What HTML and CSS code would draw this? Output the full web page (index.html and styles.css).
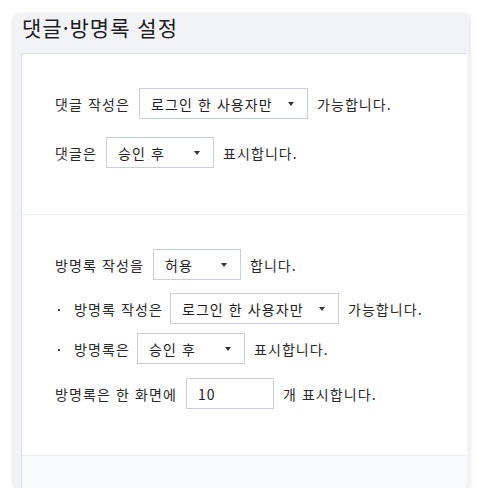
FILE: index.html
```html
<!DOCTYPE html>
<html lang="ko">
<head>
<meta charset="utf-8">
<title>댓글·방명록 설정</title>
<link rel="stylesheet" href="styles.css">
</head>
<body>
<div class="card">
  <h2 class="card-title">댓글·방명록 설정</h2>
  <div class="panel">
    <div class="section section-comment">
      <div class="row">
        <span class="label">댓글 작성은</span>
        <div class="select w168"><span>로그인 한 사용자만</span><i class="arrow"></i></div>
        <span class="label">가능합니다.</span>
      </div>
      <div class="row row-gap18">
        <span class="label">댓글은</span>
        <div class="select w107"><span>승인 후</span><i class="arrow"></i></div>
        <span class="label">표시합니다.</span>
      </div>
    </div>
    <div class="section section-guest">
      <div class="row">
        <span class="label">방명록 작성을</span>
        <div class="select w87"><span>허용</span><i class="arrow"></i></div>
        <span class="label">합니다.</span>
      </div>
      <div class="row row-gap13">
        <i class="bullet"></i>
        <span class="label">방명록 작성은</span>
        <div class="select w168"><span>로그인 한 사용자만</span><i class="arrow"></i></div>
        <span class="label">가능합니다.</span>
      </div>
      <div class="row row-gap9">
        <i class="bullet"></i>
        <span class="label">방명록은</span>
        <div class="select w107"><span>승인 후</span><i class="arrow"></i></div>
        <span class="label">표시합니다.</span>
      </div>
      <div class="row row-gap14">
        <span class="label">방명록은 한 화면에</span>
        <div class="input w87">10</div>
        <span class="label">개 표시합니다.</span>
      </div>
    </div>
    <div class="footer"></div>
  </div>
</div>
</body>
</html>
```

FILE: styles.css
```css
* { box-sizing: border-box; }
html, body {
  margin: 0;
  padding: 0;
  background: #ffffff;
  font-family: "Noto Sans CJK KR", "Noto Sans", sans-serif;
  color: #2a2a2a;
}
body { padding: 14px 14px 0 14px; }

.card {
  width: 455px;
  height: 474px;
  background: #f2f3f6;
  border-radius: 5px;
  box-shadow: 0 1px 5px rgba(0, 0, 0, 0.16);
  display: flex;
  flex-direction: column;
}

.card-title {
  margin: 0;
  height: 39px;
  padding: 0 0 0 8px;
  font-size: 21px;
  font-weight: 400;
  line-height: 27px;
  color: #1e1e1e;
  letter-spacing: 1px;
  white-space: nowrap;
}

.panel {
  flex: 1;
  margin: 0 2px 0 7px;
  background: #fff;
  border-top: 1px solid #dcdfea;
  border-left: 1px solid #dcdfea;
  display: flex;
  flex-direction: column;
  border-bottom-right-radius: 4px;
}

.section {
  padding-left: 33px;
}
.section-comment {
  padding-top: 34px;
  padding-bottom: 46px;
  border-bottom: 1px solid #eceef2;
}
.section-guest {
  padding-top: 34px;
  padding-bottom: 46px;
}

.row {
  display: flex;
  align-items: center;
  height: 31px;
  font-size: 14px;
  letter-spacing: 1.1px;
}
.row-gap18 { margin-top: 18px; }
.row-gap13 { margin-top: 13px; }
.row-gap9 { margin-top: 9px; }
.row-gap14 { margin-top: 14px; }

.label {
  white-space: nowrap;
  line-height: 20px;
}

.bullet {
  display: block;
  width: 2px;
  height: 2px;
  background: #444;
  margin: 2px 14px 0 3px;
}

.select, .input {
  height: 31px;
  margin: 0 9px;
  border: 1px solid #c8cfdb;
  background: #fff;
  display: flex;
  align-items: center;
  font-size: 14px;
  color: #222;
  padding-left: 11px;
  white-space: nowrap;
}
.select {
  justify-content: space-between;
  padding-right: 13px;
}
.bullet + .label + .select { margin-left: 7px; }
.w168 { width: 169px; }
.w107 { width: 108px; }
.w87 { width: 88px; }

.arrow {
  display: block;
  width: 0;
  height: 0;
  border-left: 3.5px solid transparent;
  border-right: 3.5px solid transparent;
  border-top: 4px solid #333;
  margin-top: 1px;
}

.footer {
  flex: 1;
  border-top: 1px solid #eceef2;
  background: #f8f9fb;
  border-bottom-right-radius: 4px;
}
```
